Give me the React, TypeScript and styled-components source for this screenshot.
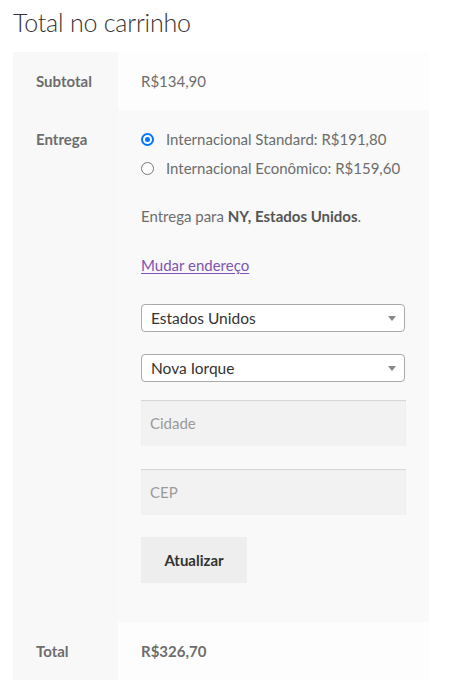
import React from "react";
import styled, { createGlobalStyle } from "styled-components";

const Global = createGlobalStyle`
  html, body { margin: 0; padding: 0; background: #ffffff; }
  body { font-family: Lato, "Noto Sans", sans-serif; color: #6d6d6d; }
  * { box-sizing: border-box; }
`;

const Page = styled.div`
  padding: 0 22px 0 13px;
  width: 451px;
`;

const Title = styled.h2`
  margin: 0;
  padding-top: 6px;
  height: 52px;
  font-size: 25px;
  font-weight: 300;
  color: #333333;
  line-height: 32px;
  letter-spacing: -0.2px;
`;

const Table = styled.div`
  width: 416px;
  display: flex;
  flex-direction: column;
`;

const Row = styled.div<{ $alt?: boolean }>`
  display: grid;
  grid-template-columns: 105px 311px;
  & > div:last-child {
    background: ${(p) => (p.$alt ? "#f9f9f9" : "#fdfdfd")};
  }
`;

const Th = styled.div`
  background: #f8f8f8;
  padding: 16px 0 16px 23px;
  font-size: 15px;
  font-weight: 700;
  line-height: 26px;
  color: #6d6d6d;
`;

const Td = styled.div<{ $bold?: boolean; $pb?: number }>`
  padding: 16px 23px ${(p) => p.$pb ?? 16}px 23px;
  font-size: 15px;
  line-height: 26px;
  font-weight: ${(p) => (p.$bold ? 700 : 400)};
  color: #6d6d6d;
`;

const MethodList = styled.ul`
  list-style: none;
  margin: 0;
  padding: 0;
  display: flex;
  flex-direction: column;
  gap: 3px;
`;

const Method = styled.li`
  display: flex;
  align-items: center;
  gap: 12px;
  height: 26px;
`;

const Radio = styled.span<{ $checked?: boolean }>`
  width: 13px;
  height: 13px;
  border-radius: 50%;
  flex: none;
  border: ${(p) => (p.$checked ? "2px solid #0075ff" : "1.5px solid #767676")};
  background: #ffffff;
  display: flex;
  align-items: center;
  justify-content: center;
  &::after {
    content: "";
    display: ${(p) => (p.$checked ? "block" : "none")};
    width: 5px;
    height: 5px;
    border-radius: 50%;
    background: #0075ff;
  }
`;

const Destination = styled.p`
  margin: 22px 0 0;
  line-height: 26px;
  strong { color: #555555; font-weight: 700; }
`;

const ChangeLink = styled.a`
  display: block;
  margin-top: 23px;
  color: #7f54b3;
  text-decoration: underline;
  text-underline-offset: 2px;
  line-height: 26px;
`;

const Form = styled.div`
  margin-top: 26px;
  display: flex;
  flex-direction: column;
  align-items: flex-start;
  gap: 22px;
`;

const Select = styled.div<{ $gapAfter?: number }>`
  width: 264px;
  height: 28px;
  border: 1px solid #aaaaaa;
  border-radius: 4px;
  background: #ffffff;
  display: flex;
  align-items: center;
  justify-content: space-between;
  padding: 0 8px 0 9px;
  color: #333333;
  font-size: 15.5px;
  margin-bottom: ${(p) => (p.$gapAfter ?? 22) - 22}px;
`;

const Caret = styled.span`
  width: 0;
  height: 0;
  border-left: 4px solid transparent;
  border-right: 4px solid transparent;
  border-top: 5px solid #888888;
`;

const Input = styled.div<{ $gapAfter?: number }>`
  width: 265px;
  height: 46px;
  background: #f2f2f2;
  box-shadow: inset 0 1px 1px rgba(0, 0, 0, 0.125);
  padding: 0 9px;
  display: flex;
  align-items: center;
  color: #9a9a9a;
  font-size: 15px;
  margin-bottom: ${(p) => (p.$gapAfter ?? 22) - 22}px;
`;

const Button = styled.button`
  border: 0;
  background: #eeeeee;
  color: #333333;
  font-family: inherit;
  font-weight: 700;
  font-size: 15px;
  width: 106px;
  height: 46px;
  padding: 0;
`;

export default function App() {
  return (
    <>
      <Global />
      <Page>
        <Title>Total no carrinho</Title>
        <Table>
          <Row>
            <Th>Subtotal</Th>
            <Td>R$134,90</Td>
          </Row>
          <Row $alt>
            <Th>Entrega</Th>
            <Td $pb={39}>
              <MethodList>
                <Method>
                  <Radio $checked />
                  Internacional Standard: R$191,80
                </Method>
                <Method>
                  <Radio />
                  Internacional Econômico: R$159,60
                </Method>
              </MethodList>
              <Destination>
                Entrega para <strong>NY, Estados Unidos</strong>.
              </Destination>
              <ChangeLink href="#">Mudar endereço</ChangeLink>
              <Form>
                <Select>
                  Estados Unidos
                  <Caret />
                </Select>
                <Select $gapAfter={18}>
                  Nova Iorque
                  <Caret />
                </Select>
                <Input $gapAfter={23}>Cidade</Input>
                <Input>CEP</Input>
                <Button>Atualizar</Button>
              </Form>
            </Td>
          </Row>
          <Row>
            <Th>Total</Th>
            <Td $bold>R$326,70</Td>
          </Row>
        </Table>
      </Page>
    </>
  );
}
